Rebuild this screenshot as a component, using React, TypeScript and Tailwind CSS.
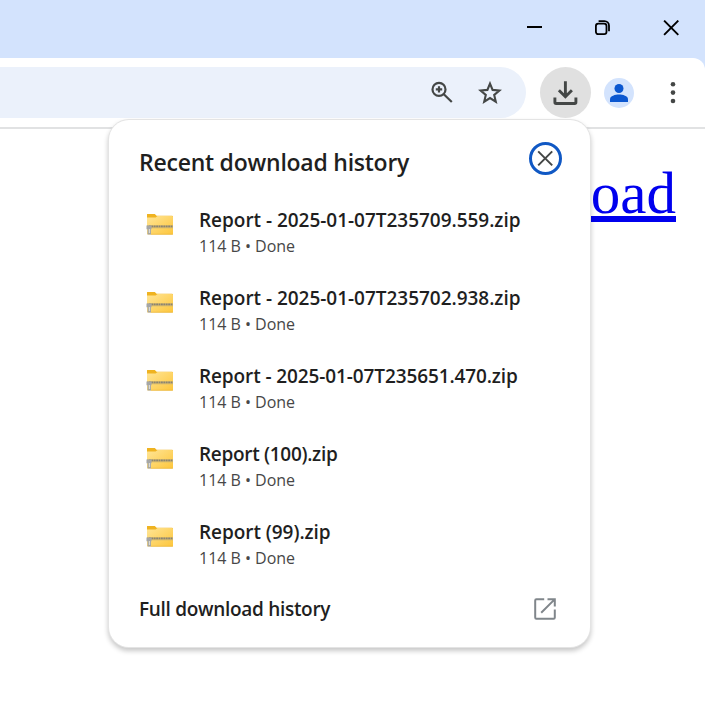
import React from "react";

type Download = { name: string; tracking: string };

const downloads: Download[] = [
  { name: "Report - 2025-01-07T235709.559.zip", tracking: "tracking-[-0.03px]" },
  { name: "Report - 2025-01-07T235702.938.zip", tracking: "tracking-[-0.03px]" },
  { name: "Report - 2025-01-07T235651.470.zip", tracking: "tracking-[-0.11px]" },
  { name: "Report (100).zip", tracking: "tracking-[-0.3px]" },
  { name: "Report (99).zip", tracking: "tracking-[-0.05px]" },
];

function WindowControls() {
  return (
    <div className="flex h-[58px] items-start justify-end bg-[#d3e3fd]">
      <button className="flex h-[55px] w-[68px] items-center justify-center" aria-label="Minimize">
        <svg width="16" height="16" viewBox="0 0 16 16" className="block">
          <path d="M1 7h15" stroke="#000" strokeWidth="2" />
        </svg>
      </button>
      <button className="flex h-[55px] w-[68px] items-center justify-center" aria-label="Restore">
        <svg width="16" height="16" viewBox="0 0 16 16" fill="none" stroke="#000" strokeWidth="1.8">
          <rect x="1.9" y="3.6" width="10.6" height="10.6" rx="2.4" />
          <path d="M4.6 1.1h5.8a4.6 4.6 0 0 1 4.6 4.6v5.6" />
        </svg>
      </button>
      <button className="flex h-[55px] w-[69px] items-center justify-center" aria-label="Close window">
        <svg width="16" height="16" viewBox="0 0 16 16" stroke="#000" strokeWidth="1.9">
          <path d="M1.1 .6l14.2 14.2M15.3 .6L1.1 14.8" />
        </svg>
      </button>
    </div>
  );
}

function Toolbar() {
  return (
    <div className="bg-[#d3e3fd]">
      <div className="flex h-[71px] items-start rounded-tr-[12px] border-b-2 border-[#e1e2e3] bg-white pt-[9px]">
        <div className="flex h-[51px] w-[526px] items-center justify-end rounded-r-full bg-[#ebf1fb] pr-[24px]">
          <svg width="24" height="24" viewBox="0 0 24 24" fill="none" stroke="#444746" strokeWidth="2.2" className="mr-[24px]">
            <circle cx="9" cy="8.4" r="6.5" />
            <path d="M13.8 13.2l8 7.8M5.8 8.4h6.4M9 5.2v6.4" />
          </svg>
          <svg width="24" height="24" viewBox="0 0 24 24" fill="none" stroke="#444746" strokeWidth="2.1">
            <path d="M12 2.6l2.6 6.3 6.8.6-5.2 4.5 1.6 6.7-5.8-3.6-5.8 3.6 1.6-6.7-5.2-4.5 6.8-.6z" />
          </svg>
        </div>
        <div className="ml-[14px] flex h-[51px] w-[51px] items-center justify-center rounded-full bg-[#e0e0e0]">
          <svg width="26" height="26" viewBox="0 0 26 26" fill="none" stroke="#444746" strokeWidth="2.9">
            <path d="M12.4 1.2v15.6M5.9 10.2l6.5 6.5 6.5-6.5" />
            <path d="M1.9 17.6v4.7q0 1.2 1.2 1.2h18.6q1.2 0 1.2-1.2v-4.7" />
          </svg>
        </div>
        <div className="mt-[11px] ml-[13px] flex h-[30px] w-[30px] items-center justify-center rounded-full bg-[#d3e3fd]">
          <svg width="18" height="18" viewBox="0 0 18 18" fill="#0b57d0">
            <circle cx="9" cy="4.5" r="4.5" />
            <path d="M0 18v-2.6C0 12 5.2 10.6 9 10.6s9 1.4 9 4.8V18z" />
          </svg>
        </div>
        <svg width="6" height="24" viewBox="0 0 6 24" fill="#444746" className="mt-[14px] ml-[36px]">
          <circle cx="3" cy="3.2" r="2.3" />
          <circle cx="3" cy="11.6" r="2.3" />
          <circle cx="3" cy="20" r="2.3" />
        </svg>
      </div>
    </div>
  );
}

function ZipFolder({ id }: { id: string }) {
  return (
    <svg width="28" height="22" viewBox="0 0 28 22" className="block shrink-0">
      <defs>
        <linearGradient id={id} x1="0" y1="0" x2="1" y2="1">
          <stop offset="0" stopColor="#ffe596" />
          <stop offset="1" stopColor="#fdc63c" />
        </linearGradient>
      </defs>
      <path d="M1 .6q0-.8.8-.8h6.8l2 2H26q1 0 1 1V8H1z" fill="#efb321" />
      <path d="M1 3.6h8.6l2-1.6H26q1 0 1 1v16.8q0 .8-.8.8H1.8q-.8 0-.8-.8z" fill={`url(#${id})`} />
      <path d="M1 12.8h26" stroke="#d3b76b" strokeWidth="3" />
      <path d="M3 12.4h24" stroke="#8a8473" strokeWidth="1.6" strokeDasharray="1.8 .6" />
      <path d="M.5 11.6h5v3.6H5v5.2H1.6v-5.2H.5z" fill="#a5a6a5" />
      <path d="M2.8 15h1.3v4H2.8z" fill="#dcdad1" />
      <path d="M5 20.3h22" stroke="#e5ad2b" strokeWidth=".6" />
    </svg>
  );
}

function DownloadRow({ item, index }: { item: Download; index: number }) {
  return (
    <li className="flex h-[78px] items-start pl-[37px]">
      <div className="pt-[15px]">
        <ZipFolder id={`folder-${index}`} />
      </div>
      <div className="ml-[25px] whitespace-nowrap pt-[8px]">
        <div className={`h-[27px] text-[19px] leading-[27px] font-semibold text-[#1f1f1f] ${item.tracking}`}>{item.name}</div>
        <div className="h-[24px] text-[16px] leading-[24px] tracking-[-0.02px] text-[#474747]">114 B • Done</div>
      </div>
    </li>
  );
}

export default function App() {
  return (
    <div className="relative h-[705px] w-[705px] overflow-hidden bg-white font-['Open_Sans','Noto_Sans',sans-serif]">
      <WindowControls />
      <Toolbar />
      <main className="flex justify-end pt-[30px] pr-[29px]">
        <a className="font-['Liberation_Serif',serif] text-[59px] leading-[68px] text-[#0000ee] underline decoration-[5.5px] underline-offset-[3px] [text-decoration-skip-ink:none]">
          oad
        </a>
      </main>
      <section className="absolute top-[120px] left-[109px] flex h-[527px] w-[481px] flex-col rounded-[20px] bg-white shadow-[0_0_0_1px_#e4e4e4,0_3px_5px_1px_rgba(0,0,0,0.22)]">
        <header className="flex h-[79px] items-start justify-between pr-[28px] pl-[30px]">
          <h1 className="pt-[26px] text-[23px] leading-[32px] font-semibold tracking-[-0.24px] whitespace-nowrap text-[#1f1f1f]">
            Recent download history
          </h1>
          <button className="mt-[22px] flex h-[33px] w-[33px] items-center justify-center rounded-full border-3 border-[#1058c4]" aria-label="Close">
            <svg width="17" height="17" viewBox="0 0 17 17" stroke="#444746" strokeWidth="2">
              <path d="M1.2 1.4l14 14M15.2 1.4l-14 14" />
            </svg>
          </button>
        </header>
        <ul>
          {downloads.map((item, i) => (
            <DownloadRow key={item.name} item={item} index={i} />
          ))}
        </ul>
        <footer className="mt-[-4px] flex h-[48px] items-center justify-between pr-[34px] pl-[30px]">
          <span className="text-[19px] leading-[27px] font-semibold tracking-[-0.3px] text-[#1f1f1f]">Full download history</span>
          <svg width="22" height="22" viewBox="0 0 22 22" fill="none" stroke="#80868b" strokeWidth="2">
            <path d="M10.2 1.2H2.4q-1.2 0-1.2 1.2v17.2q0 1.2 1.2 1.2h17.2q1.2 0 1.2-1.2v-8.1" />
            <path d="M13.5 1.2h7.3v7.3M20.6 1.4L7.2 14.8" />
          </svg>
        </footer>
      </section>
    </div>
  );
}
